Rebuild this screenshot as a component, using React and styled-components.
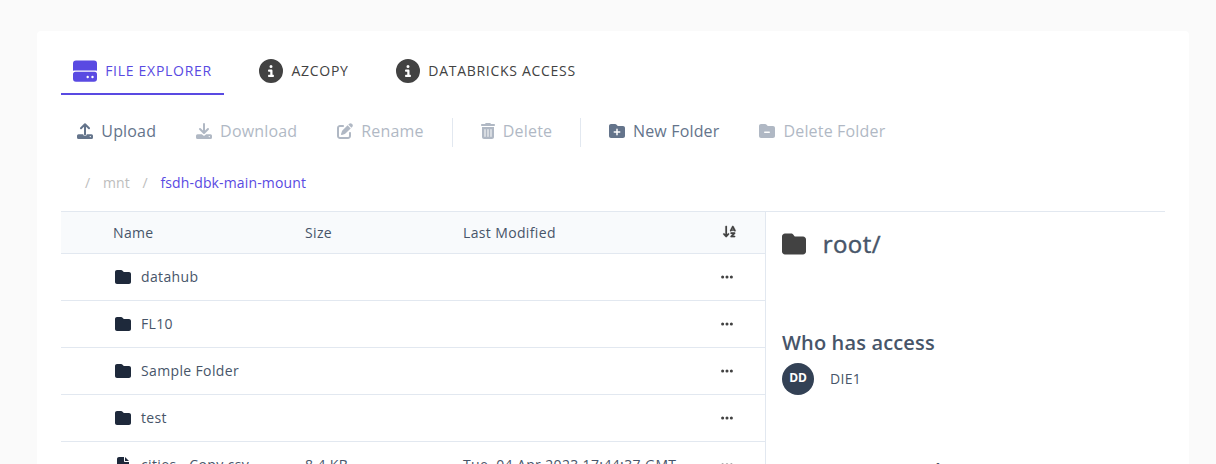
import React from "react";
import styled, { createGlobalStyle, css } from "styled-components";
import {
  FaCircleInfo, FaPenToSquare, FaTrashCan, FaFolderPlus, FaFolderMinus,
  FaFolder, FaFile, FaEllipsis, FaArrowDownAZ,
} from "react-icons/fa6";

const GlobalStyle = createGlobalStyle`
  * { box-sizing: border-box; }
  body {
    margin: 0;
    background: #fafafa;
    color: #424242;
    font-family: "Open Sans", "Noto Sans", sans-serif;
    font-size: 14px;
  }
  svg { display: block; flex: none; }
`;

const Page = styled.div`
  height: 464px;
  padding: 31px 27px 0 37px;
  overflow: hidden;
`;
const Card = styled.main`
  height: 600px;
  padding: 16px 24px;
  border-radius: 4px;
  background: #fff;
`;
const Tabs = styled.nav`
  display: flex;
  gap: 23.5px;
`;
const Tab = styled.div`
  display: flex;
  align-items: center;
  gap: 8.2px;
  height: 48px;
  padding: 0 12px;
  letter-spacing: 0.71px;
  text-transform: uppercase;
  white-space: nowrap;
  color: ${(p) => (p.$active ? "#594ae2" : "#424242")};
  box-shadow: ${(p) => (p.$active ? "inset 0 -2px #594ae2" : "none")};
`;
const TabLabel = styled.span`
  padding-bottom: 2px;
`;
const Toolbar = styled.div`
  display: flex;
  align-items: center;
  height: 29px;
  margin: 23px 0 0 16px;
`;
const Action = styled.div`
  display: flex;
  align-items: center;
  gap: 8.3px;
  padding-bottom: 4px;
  margin-right: ${(p) => p.$gap ?? 39.7}px;
  font-size: 16px;
  line-height: 24px;
  letter-spacing: 0.17px;
  white-space: nowrap;
  color: #64748b;
  opacity: ${(p) => (p.$disabled ? 0.5 : 1)};
`;
const TrashIcon = styled(FaTrashCan)`
  width: 14px;
`;
const Divider = styled.div`
  width: 1px;
  height: 29px;
  margin-right: 27.5px;
  background: #e2e8f0;
`;
const Crumbs = styled.div`
  display: flex;
  gap: 12.6px;
  height: 20px;
  margin: 26px 0 18px 24px;
  line-height: 20px;
  letter-spacing: 0.15px;
  color: #bdbdbd;
`;
const CurrentCrumb = styled.span`
  color: #594ae2;
`;
const Body = styled.div`
  display: flex;
  width: 1104px;
  border-top: 1px solid #e2e8f0;
`;
const Table = styled.section`
  width: 705px;
  height: 390px;
  border-right: 1px solid #e2e8f0;
`;
const rowGrid = css`
  display: grid;
  grid-template-columns: 192px 158px 1fr 16px;
  align-items: center;
  border-bottom: 1px solid #e2e8f0;
  color: #475569;
  white-space: nowrap;
`;
const HeaderRow = styled.div`
  ${rowGrid}
  height: 42px;
  padding: 0 30px 0 52px;
  letter-spacing: 0.36px;
  background: #f8fafc;
`;
const Row = styled.div`
  ${rowGrid}
  height: 47px;
  padding: 0 30px 1px 52px;
  letter-spacing: 0.36px;
`;
const NameCell = styled.div`
  display: flex;
  align-items: center;
  gap: 10px;
  padding-left: 2px;
  svg { color: #1e293b; }
`;
const MenuCell = styled.div`
  display: flex;
  justify-content: center;
  color: #424242;
`;
const SortIcon = styled(FaArrowDownAZ)`
  margin: 0 -4px 3px 0;
  stroke: currentColor;
  stroke-width: 6px;
`;
const Details = styled.aside`
  padding: 16px;
  color: #475569;
`;
const DetailsTitle = styled.div`
  display: flex;
  align-items: center;
  gap: 16.7px;
  height: 32px;
  font-size: 24px;
  font-weight: 500;
  letter-spacing: 0.45px;
  svg { color: #424242; }
`;
const TitleText = styled.span`
  padding-bottom: 2px;
  -webkit-text-stroke: 0.45px currentColor;
`;
const SectionTitle = styled.h2`
  height: 32px;
  margin: ${(p) => p.$top}px 0 4px;
  font-size: 20px;
  font-weight: 600;
  line-height: 32px;
  letter-spacing: 0.15px;
  white-space: nowrap;
`;
const Person = styled.div`
  display: flex;
  align-items: center;
  gap: 16px;
  letter-spacing: 0.3px;
`;
const PersonName = styled.span`
  padding-bottom: 2px;
`;
const Avatar = styled.div`
  width: 32px;
  height: 32px;
  border-radius: 50%;
  background: #334155;
  color: #fff;
  font-size: 12px;
  font-weight: 700;
  line-height: 30px;
  letter-spacing: -0.2px;
  text-align: center;
`;

const DriveIcon = () => (
  <svg width="24" height="24" viewBox="0 0 24 24" fill="currentColor">
    <path d="M3 1.4h18a3 3 0 0 1 3 3v7.4a4 4 0 0 0-1.500-.2H1.500a4 4 0 0 0-1.500.2V4.400a3 3 0 0 1 3-3z" />
    <path
      d="M2.500 12.700h19a2.500 2.500 0 0 1 2.500 2.500v4.600a3 3 0 0 1-3 3H3a3 3 0 0 1-3-3v-4.600a2.500 2.500 0 0 1 2.500-2.500zM14.700 16.800a1.200 1.200 0 1 0 0 2.400 1.200 1.200 0 0 0 0-2.400zM19.500 16.800a1.200 1.200 0 1 0 0 2.400 1.200 1.200 0 0 0 0-2.400z"
      fillRule="evenodd"
    />
  </svg>
);

const TransferIcon = ({ down }) => (
  <svg width="16" height="16" viewBox="0 0 16 16" fill="none" stroke="currentColor">
    <path
      d={down ? "M8 1v8.500M4 6L8 10l4-4" : "M8 11.500V1.500M4 5.200L8 1.300l4 3.900"}
      strokeWidth="2" strokeLinecap="round" strokeLinejoin="round"
    />
    <path
      d={
        (down
          ? "M1.500 11.200h4.300l1.500 1.300a1.100 1.100 0 0 0 1.400 0l1.500-1.300h4.300"
          : "M1.500 11.200h4.700a1.800 1.800 0 0 0 3.600 0h4.700") +
        "a1.500 1.500 0 0 1 1.500 1.500v1.800a1.500 1.500 0 0 1-1.500 1.500h-13a1.500 1.500 0 0 1-1.500-1.500v-1.800a1.500 1.500 0 0 1 1.500-1.500zM13.300 12.900a.7.7 0 1 0 0 1.400.7.7 0 0 0 0-1.400z"
      }
      fill="currentColor" fillRule="evenodd" stroke="none"
    />
  </svg>
);

const files = [
  { name: "datahub" },
  { name: "FL10" },
  { name: "Sample Folder" },
  { name: "test" },
  { name: "cities - Copy.csv", size: "8.4 KB", modified: "Tue, 04 Apr 2023 17:44:37 GMT" },
];

export default function App() {
  return (
    <Page>
      <GlobalStyle />
      <Card>
        <Tabs>
          <Tab $active><DriveIcon /><TabLabel>File Explorer</TabLabel></Tab>
          <Tab><FaCircleInfo size={24} /><TabLabel>AzCopy</TabLabel></Tab>
          <Tab><FaCircleInfo size={24} /><TabLabel>Databricks Access</TabLabel></Tab>
        </Tabs>
        <Toolbar>
          <Action><TransferIcon />Upload</Action>
          <Action $disabled><TransferIcon down />Download</Action>
          <Action $disabled $gap={28.4}><FaPenToSquare size={16} />Rename</Action>
          <Divider />
          <Action $disabled $gap={28}><TrashIcon size={16} />Delete</Action>
          <Divider />
          <Action><FaFolderPlus size={16} />New Folder</Action>
          <Action $disabled><FaFolderMinus size={16} />Delete Folder</Action>
        </Toolbar>
        <Crumbs>
          <span>/</span><span>mnt</span><span>/</span>
          <CurrentCrumb>fsdh-dbk-main-mount</CurrentCrumb>
        </Crumbs>
        <Body>
          <Table>
            <HeaderRow>
              <span>Name</span><span>Size</span><span>Last Modified</span>
              <MenuCell><SortIcon size={15} /></MenuCell>
            </HeaderRow>
            {files.map((f) => (
              <Row key={f.name}>
                <NameCell>{f.size ? <FaFile size={16} /> : <FaFolder size={16} />}{f.name}</NameCell>
                <span>{f.size}</span><span>{f.modified}</span>
                <MenuCell><FaEllipsis size={14} /></MenuCell>
              </Row>
            ))}
          </Table>
          <Details>
            <DetailsTitle><FaFolder size={24} /><TitleText>root/</TitleText></DetailsTitle>
            <SectionTitle $top={67}>Who has access</SectionTitle>
            <Person><Avatar>DD</Avatar><PersonName>DIE1</PersonName></Person>
            <SectionTitle $top={60}>Resource metadata</SectionTitle>
          </Details>
        </Body>
      </Card>
    </Page>
  );
}
